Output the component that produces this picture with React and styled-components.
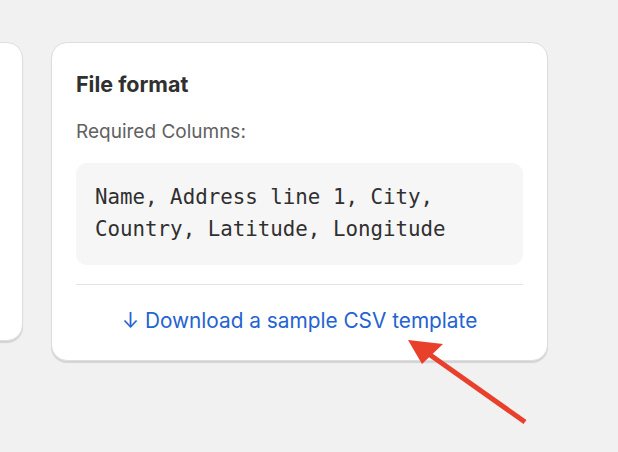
import React from 'react';
import styled, { createGlobalStyle } from 'styled-components';

const GlobalStyle = createGlobalStyle`
  html, body {
    margin: 0;
    padding: 0;
    background: #f1f1f1;
    font-family: Inter, "Noto Sans", sans-serif;
  }
`;

const Page = styled.div`
  position: relative;
  width: 618px;
  height: 452px;
  overflow: hidden;
  background: #f1f1f1;
`;

const Row = styled.div`
  display: flex;
  align-items: flex-start;
  gap: 28px;
  padding-top: 42px;
  margin-left: -200px;
`;

const Card = styled.div`
  box-sizing: border-box;
  background: #fff;
  border: 1px solid #dedede;
  border-radius: 16px;
  box-shadow: 0 2px 1px rgba(0, 0, 0, 0.12);
  width: ${(p) => p.width}px;
  height: ${(p) => p.height}px;
  padding: ${(p) => (p.padded ? '24px 24px 0 24px' : '0')};
  flex-shrink: 0;
`;

const Title = styled.h2`
  margin: 0;
  padding-top: 3px;
  font-size: 21.5px;
  font-weight: 650;
  color: #303030;
  line-height: 28px;
`;

const Label = styled.p`
  margin: 22px 0 0;
  font-size: 19px;
  color: #616161;
  line-height: 24px;
`;

const CodeBox = styled.pre`
  margin: 19px 0 0;
  background: #f6f6f6;
  border-radius: 11px;
  padding: 18px 19px 18px 19px;
  height: 102px;
  box-sizing: border-box;
  font-family: "DejaVu Sans Mono", "Liberation Mono", monospace;
  font-size: 20.8px;
  line-height: 32px;
  color: #303030;
  white-space: pre;
`;

const Divider = styled.hr`
  margin: 19px 0 0;
  border: none;
  border-top: 1px solid #e3e3e3;
`;

const DownloadLink = styled.a`
  display: block;
  text-align: center;
  margin-top: 22px;
  font-size: 20.8px;
  line-height: 28px;
  color: #2463d1;
  text-decoration: none;
`;

const Pointer = styled.svg`
  position: absolute;
  left: 400px;
  top: 330px;
`;

export default function App() {
  return (
    <Page>
      <GlobalStyle />
      <Row>
        <Card width={223} height={299} />
        <Card width={497} height={319} padded>
          <Title>File format</Title>
          <Label>Required Columns:</Label>
          <CodeBox>{'Name, Address line 1, City,\nCountry, Latitude, Longitude'}</CodeBox>
          <Divider />
          <DownloadLink href="#">↓ Download a sample CSV template</DownloadLink>
        </Card>
      </Row>
      <Pointer width="140" height="110" viewBox="0 0 140 110">
        <line x1="125" y1="92" x2="26" y2="22" stroke="#e8402a" strokeWidth="5" strokeLinecap="butt" />
        <polygon points="8,10 43,14 22,34" fill="#e8402a" />
      </Pointer>
    </Page>
  );
}
